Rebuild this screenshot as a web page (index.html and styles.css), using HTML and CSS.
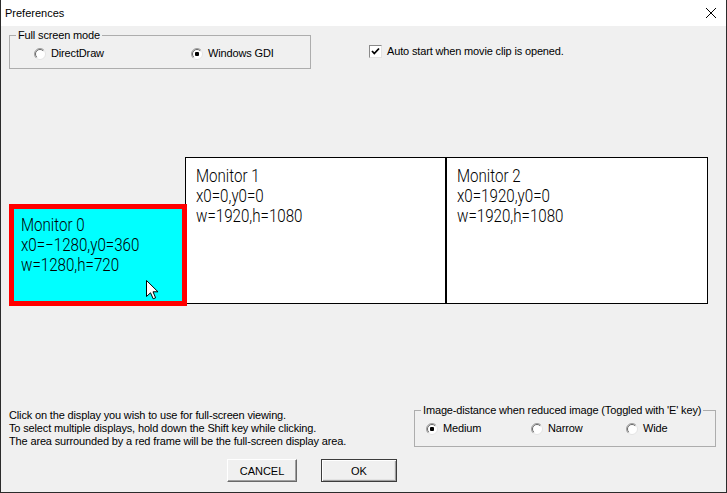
FILE: index.html
```html
<!DOCTYPE html>
<html lang="en">
<head>
  <meta charset="UTF-8" />
  <title>Preferences</title>
  <link rel="stylesheet" href="styles.css">
</head>
<body>

  <div class="window">
    <div class="titlebar">
      <span class="title">Preferences</span>
      <svg class="close" width="12" height="12" viewBox="0 0 12 12">
        <path d="M1 1 L11 11 M11 1 L1 11" stroke="#000" stroke-width="1" fill="none"/>
      </svg>
    </div>

    <div class="content">
      <div class="top-row">
        <fieldset class="group screen-mode">
          <legend>Full screen mode</legend>
          <div class="options">
            <label class="option opt-directdraw">
              <svg class="radio" width="12" height="12" viewBox="0 0 12 12">
                <circle cx="6" cy="6" r="5.5" fill="#fff" stroke="#e3e3e3"/>
                <path d="M2.1 9.9 A5.5 5.5 0 0 1 9.9 2.1" stroke="#a0a0a0" fill="none"/>
                <path d="M2.8 9.2 A4.5 4.5 0 0 1 9.2 2.8" stroke="#696969" fill="none"/>
              </svg>
              DirectDraw
            </label>
            <label class="option">
              <svg class="radio" width="12" height="12" viewBox="0 0 12 12">
                <circle cx="6" cy="6" r="5.5" fill="#fff" stroke="#e3e3e3"/>
                <path d="M2.1 9.9 A5.5 5.5 0 0 1 9.9 2.1" stroke="#a0a0a0" fill="none"/>
                <path d="M2.8 9.2 A4.5 4.5 0 0 1 9.2 2.8" stroke="#696969" fill="none"/>
                <rect x="4" y="4" width="4" height="4" rx="1" fill="#000"/>
              </svg>
              Windows GDI
            </label>
          </div>
        </fieldset>

        <label class="check">
          <span class="checkbox">
            <svg width="11" height="11" viewBox="0 0 11 11">
              <path d="M2 5 L4.3 7.5 L9 2.5" stroke="#000" stroke-width="1.8" fill="none"/>
            </svg>
          </span>
          Auto start when movie clip is opened.
        </label>
      </div>

      <div class="display-area">
        <div class="monitor monitor-1">
          <div class="monitor-text">Monitor 1<br>x0=0,y0=0<br>w=1920,h=1080</div>
        </div>
        <div class="monitor monitor-2">
          <div class="monitor-text">Monitor 2<br>x0=1920,y0=0<br>w=1920,h=1080</div>
        </div>
        <div class="monitor monitor-0 selected">
          <div class="monitor-text">Monitor 0<br>x0=&#8722;1280,y0=360<br>w=1280,h=720</div>
          <svg class="cursor" width="13" height="20" viewBox="0 0 13 20">
            <path d="M0.5 0.5 L0.5 16.5 L4.5 12.8 L7.2 18.8 L9.6 17.8 L7 11.8 L12 11.8 Z" fill="#fff" stroke="#000" stroke-width="1"/>
          </svg>
        </div>
      </div>

      <div class="bottom-row">
        <div class="hint">
          Click on the display you wish to use for full-screen viewing.<br>
          To select multiple displays, hold down the Shift key while clicking.<br>
          The area surrounded by a red frame will be the full-screen display area.
        </div>

        <fieldset class="group distance">
          <legend>Image-distance when reduced image (Toggled with 'E' key)</legend>
          <div class="options">
            <label class="option opt-medium">
              <svg class="radio" width="12" height="12" viewBox="0 0 12 12">
                <circle cx="6" cy="6" r="5.5" fill="#fff" stroke="#e3e3e3"/>
                <path d="M2.1 9.9 A5.5 5.5 0 0 1 9.9 2.1" stroke="#a0a0a0" fill="none"/>
                <path d="M2.8 9.2 A4.5 4.5 0 0 1 9.2 2.8" stroke="#696969" fill="none"/>
                <rect x="4" y="4" width="4" height="4" rx="1" fill="#000"/>
              </svg>
              Medium
            </label>
            <label class="option opt-narrow">
              <svg class="radio" width="12" height="12" viewBox="0 0 12 12">
                <circle cx="6" cy="6" r="5.5" fill="#fff" stroke="#e3e3e3"/>
                <path d="M2.1 9.9 A5.5 5.5 0 0 1 9.9 2.1" stroke="#a0a0a0" fill="none"/>
                <path d="M2.8 9.2 A4.5 4.5 0 0 1 9.2 2.8" stroke="#696969" fill="none"/>
              </svg>
              Narrow
            </label>
            <label class="option">
              <svg class="radio" width="12" height="12" viewBox="0 0 12 12">
                <circle cx="6" cy="6" r="5.5" fill="#fff" stroke="#e3e3e3"/>
                <path d="M2.1 9.9 A5.5 5.5 0 0 1 9.9 2.1" stroke="#a0a0a0" fill="none"/>
                <path d="M2.8 9.2 A4.5 4.5 0 0 1 9.2 2.8" stroke="#696969" fill="none"/>
              </svg>
              Wide
            </label>
          </div>
        </fieldset>
      </div>

      <div class="buttons">
        <button class="btn btn-cancel">CANCEL</button>
        <button class="btn btn-ok">OK</button>
      </div>
    </div>
  </div>

</body>
</html>
```

FILE: styles.css
```css
body {
  margin: 0;
  font-family: 'Liberation Sans', Arial, sans-serif;
  font-size: 11px;
  letter-spacing: -0.15px;
  color: #000;
  background-color: #f0f0f0;
}

.window {
  width: 727px;
  height: 493px;
  box-sizing: border-box;
  border: 1px solid #2b2b2b;
  border-top: none;
  display: flex;
  flex-direction: column;
  background-color: #f0f0f0;
}

.titlebar {
  height: 26px;
  flex-shrink: 0;
  background-color: #ffffff;
  display: flex;
  align-items: center;
  padding: 0 9px 0 4px;
}

.title {
  font-size: 11px;
  letter-spacing: 0;
  flex: 1;
}

.close {
  margin-top: -1px;
}

.content {
  flex: 1;
  display: flex;
  flex-direction: column;
}

/* group boxes */
.group {
  margin: 0;
  padding: 5px 0 8px 0;
  border: 1px solid #adadad;
  box-sizing: border-box;
  min-width: 0;
}

.group legend {
  margin-left: 6px;
  padding: 0 2px;
  line-height: 13px;
}

.options {
  display: flex;
  line-height: 13px;
}

.option {
  display: flex;
  align-items: center;
  gap: 5px;
  white-space: nowrap;
}

.radio {
  flex-shrink: 0;
}

/* top row */
.top-row {
  display: flex;
  align-items: flex-start;
  margin-top: 3px;
}

.screen-mode {
  margin-left: 8px;
  width: 302px;
}

.screen-mode .options {
  padding-left: 24px;
}

.opt-directdraw {
  width: 157px;
}

.check {
  display: flex;
  align-items: center;
  gap: 5px;
  margin-left: 58px;
  margin-top: 16px;
  line-height: 13px;
}

.checkbox {
  width: 13px;
  height: 13px;
  box-sizing: border-box;
  background-color: #fff;
  border: 1px solid;
  border-color: #8a8a8a #e3e3e3 #e3e3e3 #8a8a8a;
  display: flex;
  align-items: center;
  justify-content: center;
}

/* monitor layout */
.display-area {
  position: relative;
  height: 335px;
  flex-shrink: 0;
}

.monitor {
  position: absolute;
  box-sizing: border-box;
  background-color: #fff;
  border: 1px solid #000;
  padding: 8px 0 0 10px;
}

.monitor-text {
  font-family: Roboto, 'Liberation Sans', sans-serif;
  font-weight: 300;
  font-size: 18px;
  line-height: 20px;
  letter-spacing: 0;
  white-space: nowrap;
  transform: scaleX(0.84);
  transform-origin: left top;
}

.monitor-1 {
  left: 184px;
  top: 88px;
  width: 261px;
  height: 147px;
}

.monitor-2 {
  left: 445px;
  top: 88px;
  width: 262px;
  height: 147px;
}

.monitor-0 {
  left: 8px;
  top: 135px;
  width: 178px;
  height: 102px;
  background-color: #00ffff;
  padding: 6px 0 0 7px;
}

.monitor-0.selected {
  border: 5px solid #ff0000;
}

.cursor {
  position: absolute;
  left: 132px;
  top: 71px;
}

/* bottom */
.bottom-row {
  display: flex;
  align-items: flex-start;
}

.hint {
  margin-top: 5px;
  padding-left: 8px;
  line-height: 13px;
}

.distance {
  margin-left: auto;
  margin-right: 10px;
  width: 302px;
  padding: 5px 0 11px 0;
}

.distance .options {
  padding-left: 11px;
}

.opt-medium {
  width: 105px;
}

.opt-narrow {
  width: 95px;
}

.buttons {
  display: flex;
  gap: 24px;
  margin-top: 11px;
  padding-left: 226px;
}

.btn {
  height: 23px;
  box-sizing: border-box;
  font-family: 'Liberation Sans', Arial, sans-serif;
  font-size: 11px;
  color: #000;
  background-color: #f0f0f0;
  border: 1px solid;
  border-color: #fff #696969 #696969 #fff;
  box-shadow: inset -1px -1px 0 #a0a0a0;
  padding: 0;
}

.btn-cancel {
  width: 70px;
}

.btn-ok {
  width: 76px;
  border-color: #3c3c3c;
  box-shadow: inset 1px 1px 0 #fff, inset -1px -1px 0 #a0a0a0, inset -2px -2px 0 #e3e3e3;
}
```
